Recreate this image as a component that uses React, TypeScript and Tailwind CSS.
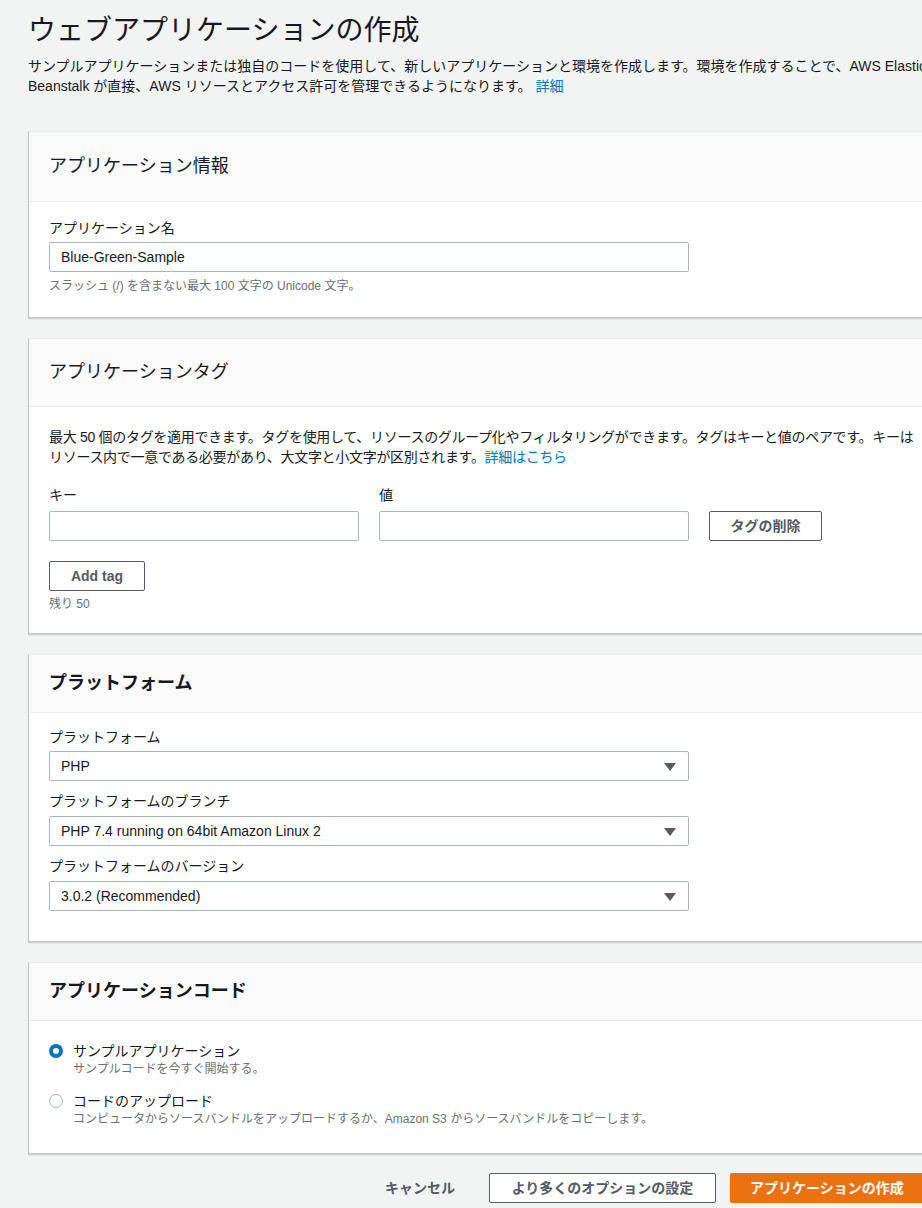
import React from "react";

const ff = { fontFamily: '"Liberation Sans","Noto Sans CJK JP",sans-serif' };

function Card({ title, bold, children, hh }: { title: string; bold?: boolean; children: React.ReactNode; hh: string }) {
  return (
    <div className="ml-[28px] bg-white border-l border-b border-[#c6c6c6] border-t border-t-[#eaeded] shadow-[0_1px_1px_rgba(0,0,0,0.15)]">
      <div className={`${hh} bg-[#fafafa] border-b border-[#eaeded] px-[20px] flex items-center`}>
        <h2 className={`text-[18px] text-[#16191f] ${bold ? "font-bold" : ""}`}>{title}</h2>
      </div>
      {children}
    </div>
  );
}

const Caret = () => (
  <svg width="12" height="8" viewBox="0 0 12 8" className="absolute right-[12px] top-[11px]"><path d="M0 0h12L6 8z" fill="#545b64" /></svg>
);

function Select({ v }: { v: string }) {
  return (
    <div className="relative w-[640px] h-[30px] border border-[#aab7b8] rounded-[2px] px-[11px] flex items-center text-[14px] text-[#16191f]">
      {v}
      <Caret />
    </div>
  );
}

export default function App() {
  return (
    <div style={ff} className="bg-[#f2f3f3] w-[922px] h-[1208px] overflow-hidden text-[#16191f]">
      <div className="pl-[28px] pt-[12px]">
        <h1 className="text-[28px] leading-[38px] text-[#16191f] whitespace-nowrap">ウェブアプリケーションの作成</h1>
        <p className="text-[14px] leading-[20px] mt-[6px] whitespace-nowrap">サンプルアプリケーションまたは独自のコードを使用して、新しいアプリケーションと環境を作成します。環境を作成することで、AWS Elastic</p>
        <p className="text-[14px] leading-[20px] whitespace-nowrap">Beanstalk が直接、AWS リソースとアクセス許可を管理できるようになります。 <span className="text-[#0073bb]">詳細</span></p>
      </div>
      <div className="mt-[35px] flex flex-col gap-[20px]">
        <Card title="アプリケーション情報" hh="h-[70px]">
          <div className="px-[20px] pt-[16px] pb-[22px]">
            <div className="text-[14px] leading-[20px]">アプリケーション名</div>
            <div className="mt-[4px] w-[640px] h-[30px] border border-[#aab7b8] rounded-[2px] px-[11px] flex items-center text-[14px]">Blue-Green-Sample</div>
            <div className="mt-[5px] text-[12px] text-[#687078]">スラッシュ (/) を含まない最大 100 文字の Unicode 文字。</div>
          </div>
        </Card>
        <Card title="アプリケーションタグ" hh="h-[68px]">
          <div className="pl-[20px] pr-[2px] pt-[20px] pb-[20px]">
            <p className="text-[14px] leading-[20px] tracking-[-0.3px]">最大 50 個のタグを適用できます。タグを使用して、リソースのグループ化やフィルタリングができます。タグはキーと値のペアです。キーはリソース内で一意である必要があり、大文字と小文字が区別されます。<span className="text-[#0073bb]">詳細はこちら</span></p>
            <div className="mt-[18px] flex gap-[20px] items-end">
              <div>
                <div className="text-[14px] leading-[20px]">キー</div>
                <div className="mt-[6px] w-[310px] h-[30px] border border-[#aab7b8] rounded-[2px]" />
              </div>
              <div>
                <div className="text-[14px] leading-[20px]">値</div>
                <div className="mt-[6px] w-[310px] h-[30px] border border-[#aab7b8] rounded-[2px]" />
              </div>
              <div className="w-[113px] h-[30px] border border-[#545b64] rounded-[2px] flex items-center justify-center text-[14px] font-bold text-[#545b64]">タグの削除</div>
            </div>
            <div className="mt-[20px] w-[96px] h-[30px] border border-[#545b64] rounded-[2px] flex items-center justify-center text-[14px] font-bold text-[#545b64]">Add tag</div>
            <div className="mt-[4px] text-[12px] text-[#687078]">残り 50</div>
          </div>
        </Card>
        <Card title="プラットフォーム" bold hh="h-[58px]">
          <div className="px-[20px] pt-[14px] pb-[30px]">
            <div className="text-[14px] leading-[20px]">プラットフォーム</div>
            <div className="mt-[4px]"><Select v="PHP" /></div>
            <div className="mt-[10px] text-[14px] leading-[20px]">プラットフォームのブランチ</div>
            <div className="mt-[5px]"><Select v="PHP 7.4 running on 64bit Amazon Linux 2" /></div>
            <div className="mt-[10px] text-[14px] leading-[20px]">プラットフォームのバージョン</div>
            <div className="mt-[5px]"><Select v="3.0.2 (Recommended)" /></div>
          </div>
        </Card>
        <Card title="アプリケーションコード" bold hh="h-[58px]">
          <div className="px-[20px] pt-[20px] pb-[26px]">
            <div className="flex gap-[10px]">
              <div className="mt-[3px] w-[14px] h-[14px] rounded-full border-[4px] border-[#0073bb] bg-white" />
              <div>
                <div className="text-[14px] leading-[20px]">サンプルアプリケーション</div>
                <div className="text-[12px] leading-[16px] text-[#687078]">サンプルコードを今すぐ開始する。</div>
              </div>
            </div>
            <div className="flex gap-[10px] mt-[14px]">
              <div className="mt-[3px] w-[14px] h-[14px] rounded-full border border-[#aab7b8] bg-white" />
              <div>
                <div className="text-[14px] leading-[20px]">コードのアップロード</div>
                <div className="text-[12px] leading-[16px] text-[#687078]">コンピュータからソースバンドルをアップロードするか、Amazon S3 からソースバンドルをコピーします。</div>
              </div>
            </div>
          </div>
        </Card>
      </div>
      <div className="mt-[19px] flex items-center justify-end gap-[14px]">
        <div className="text-[14px] font-bold text-[#545b64] px-[20px]">キャンセル</div>
        <div className="h-[30px] w-[227px] border border-[#545b64] rounded-[2px] flex items-center justify-center text-[14px] font-bold text-[#545b64] bg-white">より多くのオプションの設定</div>
        <div className="h-[30px] w-[192px] bg-[#ec7211] rounded-l-[2px] flex items-center pl-[20px] text-[14px] font-bold text-white whitespace-nowrap">アプリケーションの作成</div>
      </div>
    </div>
  );
}
